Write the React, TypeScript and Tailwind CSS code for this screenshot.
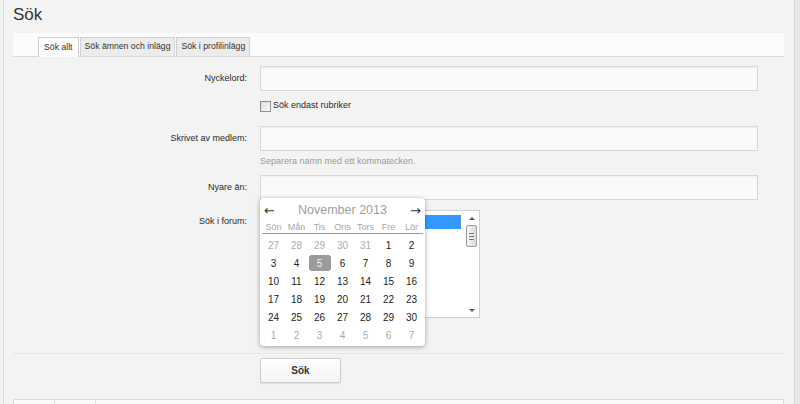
import React from 'react';

// Kalenderdata för november 2013
const WEEKS: { d: number; muted?: boolean; selected?: boolean }[][] = [
    [{ d: 27, muted: true }, { d: 28, muted: true }, { d: 29, muted: true }, { d: 30, muted: true }, { d: 31, muted: true }, { d: 1 }, { d: 2 }],
    [{ d: 3 }, { d: 4 }, { d: 5, selected: true }, { d: 6 }, { d: 7 }, { d: 8 }, { d: 9 }],
    [10, 11, 12, 13, 14, 15, 16].map((d) => ({ d })),
    [17, 18, 19, 20, 21, 22, 23].map((d) => ({ d })),
    [24, 25, 26, 27, 28, 29, 30].map((d) => ({ d })),
    [1, 2, 3, 4, 5, 6, 7].map((d) => ({ d, muted: true })),
];

const DAY_NAMES = ['Sön', 'Mån', 'Tis', 'Ons', 'Tors', 'Fre', 'Lör'];

const TABS = ['Sök allt', 'Sök ämnen och inlägg', 'Sök i profilinlägg'];

const Input = () => (
    <div className="h-[25px] w-[498px] border border-[#d8d8d8] bg-[#fafafa] shadow-[inset_0_1px_2px_rgba(0,0,0,0.05)]" />
);

const Calendar = () => (
    <div className="absolute left-0 top-[23px] z-10 w-[165px] rounded-[4px] bg-white shadow-[0_1px_5px_rgba(0,0,0,0.35)]">
        <div className="flex h-[23px] items-center justify-between px-[4px] pt-px">
            <span className="font-['DejaVu_Sans',sans-serif] text-[13px] leading-none text-[#333]">←</span>
            <span className="text-[12.5px] text-[#a0a0a0]">November 2013</span>
            <span className="font-['DejaVu_Sans',sans-serif] text-[13px] leading-none text-[#333]">→</span>
        </div>
        <div className="mx-[2px] grid h-[13px] grid-cols-7 border-b border-[#9a9a9a] text-center text-[9px] leading-[12px] text-[#a6a6a6]">
            {DAY_NAMES.map((n) => (
                <span key={n}>{n}</span>
            ))}
        </div>
        <div className="mx-[2px] pb-[2px] pt-[2px]">
            {WEEKS.map((week, i) => (
                <div key={i} className="grid h-[18px] grid-cols-7 text-[10px]">
                    {week.map((day, j) => (
                        <div key={j} className="flex items-center justify-center">
                            {day.selected ? (
                                <span className="flex h-[16px] w-[22px] items-center justify-center rounded-[3px] bg-[#9b9b9b] text-[#eeeeee]">
                                    {day.d}
                                </span>
                            ) : (
                                <span className={day.muted ? 'text-[#ababab]' : 'text-[#222]'}>{day.d}</span>
                            )}
                        </div>
                    ))}
                </div>
            ))}
        </div>
    </div>
);

export default function App() {
    return (
        <div className="flex h-[404px] w-[800px] overflow-hidden bg-[#f3f3f3] font-['Liberation_Sans',Arial,sans-serif] text-[9px] text-[#2a2a2a]">
            <div className="w-[3px] shrink-0" />
            <div className="min-w-0 flex-1 border-l border-[#d9d9d9] pl-[9px] pr-[10px]">
                <h1 className="pt-[5px] text-[17px] leading-[20px] text-[#333]">Sök</h1>

                {/* Flikar */}
                <div className="mt-[8px] flex h-[24px] items-end border-b border-[#dadada] bg-[#fcfcfc] pl-[25px]">
                    {TABS.map((tab, i) => (
                        <div
                            key={tab}
                            className={
                                i === 0
                                    ? 'relative -mb-px mr-px flex h-[20px] items-center border border-b-0 border-[#cfcfcf] bg-[#fcfcfc] px-[5px] text-[8.7px] text-[#333]'
                                    : 'mr-px flex h-[19px] items-center border border-b-0 border-[#d2d2d2] bg-[#ececec] px-[4px] text-[8.7px] text-[#333]'
                            }
                        >
                            {tab}
                        </div>
                    ))}
                </div>

                {/* Formulär */}
                <div className="mt-[9px] flex items-center">
                    <label className="w-[234px] text-right">Nyckelord:</label>
                    <div className="ml-[13px]">
                        <Input />
                    </div>
                </div>
                <div className="ml-[247px] mt-[9px] flex h-[12px] items-center">
                    <span className="h-[11px] w-[11px] border border-[#8e8e8e] bg-gradient-to-br from-[#dedede] to-[#fbfbfb]" />
                    <span className="ml-[2px]">Sök endast rubriker</span>
                </div>

                <div className="mt-[14px] flex items-center">
                    <label className="w-[234px] text-right">Skrivet av medlem:</label>
                    <div className="ml-[13px]">
                        <Input />
                    </div>
                </div>
                <div className="ml-[247px] mt-[3px] leading-[14px] text-[#9a9a9a]">Separera namn med ett kommatecken.</div>

                <div className="mt-[7px] flex items-center">
                    <label className="w-[234px] text-right">Nyare än:</label>
                    <div className="relative ml-[13px]">
                        <Input />
                        <Calendar />
                    </div>
                </div>

                <div className="mt-[10px] flex items-start">
                    <label className="w-[234px] pt-[5px] text-right">Sök i forum:</label>
                    <div className="ml-[13px] flex h-[108px] w-[220px] border border-[#d0d0d0] bg-white">
                        <div className="flex-1 pl-[2px] pr-[4px] pt-[4px]">
                            <div className="h-[14px] bg-[#3399ff]" />
                        </div>
                        <div className="mr-[1px] flex w-[13px] flex-col items-center pb-[5px] pt-[6px]">
                            <span className="h-0 w-0 border-x-[3px] border-b-[3px] border-x-transparent border-b-[#555]" />
                            <span className="mt-[5px] flex h-[22px] w-[11px] flex-col items-center justify-center gap-[2px] rounded-[2px] border border-[#9c9c9c] bg-gradient-to-r from-[#f4f4f4] to-[#dcdcdc]">
                                <span className="h-px w-[5px] bg-[#777]" />
                                <span className="h-px w-[5px] bg-[#777]" />
                                <span className="h-px w-[5px] bg-[#777]" />
                            </span>
                            <span className="flex-1" />
                            <span className="h-0 w-0 border-x-[3px] border-t-[3px] border-x-transparent border-t-[#555]" />
                        </div>
                    </div>
                </div>

                <div className="mt-[35px] border-t border-[#e6e6e6]" />
                <div className="ml-[247px] mt-[4px]">
                    <button className="flex h-[25px] w-[81px] items-center justify-center rounded-[2px] border border-[#cdcdcd] bg-gradient-to-b from-white to-[#f4f4f4] text-[10px] font-bold text-[#333] shadow-[0_1px_1px_rgba(0,0,0,0.08)]">
                        Sök
                    </button>
                </div>

                <div className="mt-[16px] flex h-[20px] rounded-t-[2px] border border-[#dadada] bg-[#fafafa]">
                    <div className="w-[41px] border-r border-[#e0e0e0]" />
                    <div className="w-[41px] border-r border-[#e0e0e0]" />
                </div>
            </div>
            <div className="w-[6px] shrink-0 border-l border-[#d5d5d5] bg-[#e6e6e6]" />
        </div>
    );
}
